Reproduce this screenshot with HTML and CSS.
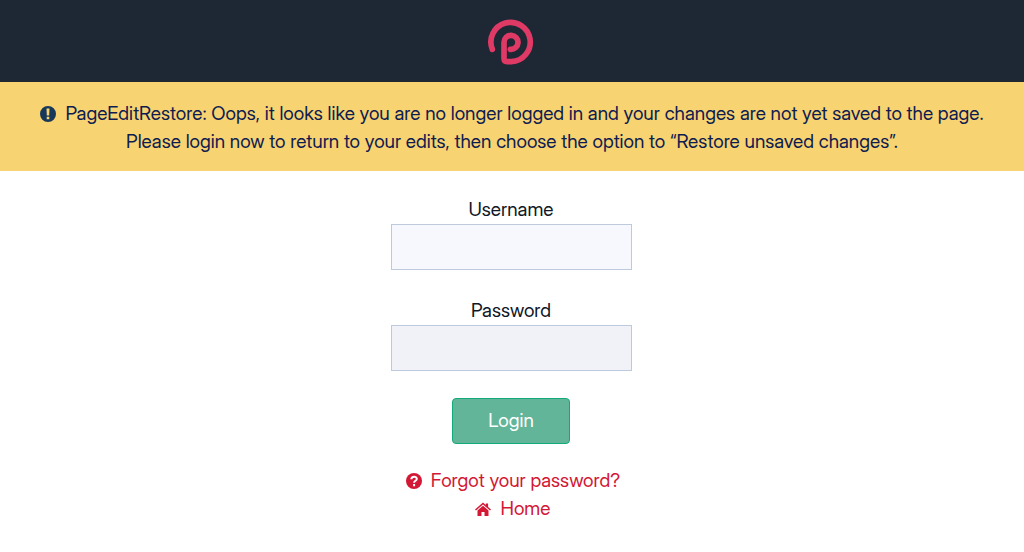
FILE: index.html
```
<!DOCTYPE html>
<html lang="en">
<head>
<meta charset="utf-8">
<meta name="viewport" content="width=device-width, initial-scale=1">
<title>Login</title>
<link rel="stylesheet" href="styles.css">
</head>
<body>
<header class="masthead">
  <svg class="logo" viewBox="13 13 138 138" role="img" aria-label="Logo">
    <path d="M26 104A59 59 0 1 1 83 141H70Q61 141 61 131V83A21 21 0 1 1 80 104"/>
  </svg>
</header>
<div class="notice" role="alert">
  <p class="notice-text"><svg class="icon notice-icon" viewBox="0 0 16 16" aria-hidden="true"><path fill-rule="evenodd" d="M8 0a8 8 0 1 1 0 16A8 8 0 0 1 8 0ZM6.500 2.600 6.800 9.600h2.400l.3-7ZM6.700 10.800v2.500h2.600v-2.500Z"/></svg>PageEditRestore: Oops, it looks like you are no longer logged in and your changes are not yet saved to the page. Please login now to return to your edits, then choose the option to “Restore unsaved changes”.</p>
</div>
<main class="content">
  <form class="login">
    <div class="field">
      <label for="username">Username</label>
      <input class="input" id="username" name="username" type="text">
    </div>
    <div class="field">
      <label for="password">Password</label>
      <input class="input input-muted" id="password" name="password" type="password">
    </div>
    <button class="submit" type="submit">Login</button>
  </form>
  <nav class="links">
    <a class="link" href="#forgot"><svg class="icon" viewBox="0 0 16 16" aria-hidden="true"><circle cx="8" cy="8" r="8"/><path class="mark" d="M5.300 6.300C5.500 3 10.800 3 10.800 6C10.800 7.800 8.100 7.700 8.100 9.700M8.100 10.900V13.200"/></svg>Forgot your password?</a>
    <a class="link" href="#home"><svg class="icon" viewBox="0 0 16 16" aria-hidden="true"><path d="M0 8.400 8 1.600l2.800 2.400V2.400h2.300v3.500L16 8.400l-1 1.100-7-5.900-7 5.900ZM8 4.800l5.500 4.600V15H9.500v-4h-3v4h-4V9.400Z"/></svg>Home</a>
  </nav>
</main>
</body>
</html>
```
FILE: styles.css
```
* {
  box-sizing: border-box;
}

body {
  margin: 0;
  background: #fff;
  color: #101828;
  font-family: "Inter Display", Inter, "Liberation Sans", sans-serif;
  font-size: 19px;
  line-height: 28px;
  text-align: center;
}

.masthead {
  display: flex;
  justify-content: center;
  padding: 19px 2px 17px 0;
  background: #1e2835;
}

.logo {
  width: 46px;
  height: 46px;
  fill: none;
  stroke: #df3a66;
  stroke-width: 17;
  stroke-linecap: round;
}

.notice {
  padding: 18px 24px 15px;
  background: #f7d372;
  color: #0f1c50;
}

.notice-text {
  margin: 0;
}

.icon {
  width: 16px;
  height: 16px;
  margin-right: 9px;
  vertical-align: -2px;
  fill: currentColor;
}

.notice-icon {
  color: #173858;
}

.mark {
  fill: none;
  stroke: #fff;
  stroke-width: 2;
}

.content {
  padding: 25px 18px 24px 16px;
}

.login {
  display: flex;
  flex-direction: column;
  align-items: center;
}

.field {
  display: flex;
  flex-direction: column;
  width: 100%;
  max-width: 241px;
  margin-bottom: 27px;
}

.input {
  width: 100%;
  height: 46px;
  padding: 8px 12px;
  border: 1px solid #bdc9dc;
  border-radius: 0;
  background: #f6f8fd;
  color: inherit;
  font: inherit;
}

.input-muted {
  background: #f0f2f7;
}

.submit {
  padding: 8px 35px;
  border: 1px solid #13aa7b;
  border-radius: 4px;
  background: #62b599;
  color: #fff;
  font: inherit;
}

.links {
  display: flex;
  flex-direction: column;
  align-items: center;
  margin-top: 23px;
  padding-left: 4px;
}

.link {
  color: #d31835;
  text-decoration: none;
}
```
